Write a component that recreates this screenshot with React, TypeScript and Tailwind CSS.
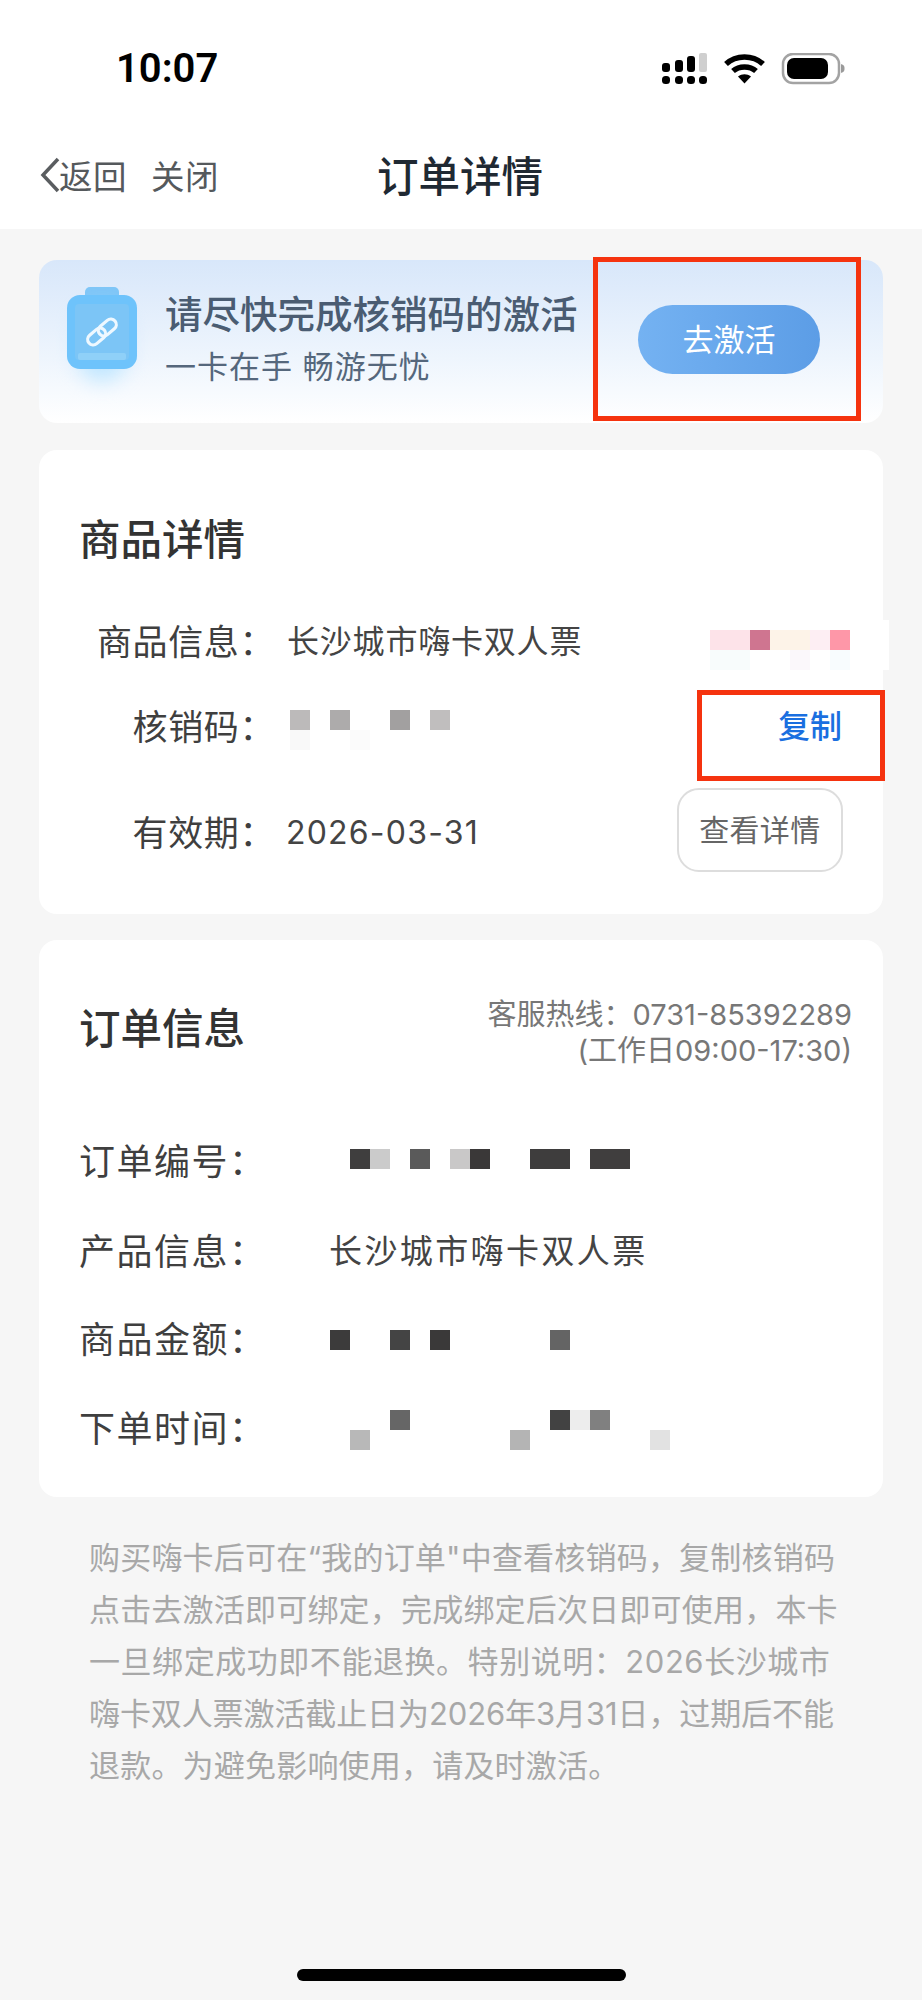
const cjk = "font-['Inter','Noto_Sans_CJK_SC',sans-serif]"

type Cell = [number, number, number, string]

// pixelated censor blocks, drawn on a 20px grid
function Mosaic({ w, h, cells }: { w: number; h: number; cells: Cell[] }) {
  return (
    <svg width={w} height={h} viewBox={`0 0 ${w} ${h}`} className="block shrink-0">
      {cells.map(([x, y, cw, fill], i) => (
        <rect key={i} x={x} y={y} width={cw} height={20} fill={fill} />
      ))}
    </svg>
  )
}

function StatusBar() {
  return (
    <div className="flex h-[100px] items-start justify-between bg-white pl-[116px] pr-[76px] pt-[46px]">
      <span className="font-['Roboto',sans-serif] text-[40px] font-semibold leading-[46px] text-black">10:07</span>
      <svg width={184} height={32} viewBox="0 0 184 32" className="mt-[7px] block">
        <g fill="#000">
          <rect x="0" y="10" width="8" height="9" rx="3" />
          <rect x="13" y="7" width="8" height="12" rx="3" />
          <rect x="25" y="3" width="8" height="16" rx="3" />
          <rect x="37" y="0" width="8" height="19" rx="2" fill="#cfcfcf" />
          <rect x="0" y="23" width="8" height="8" rx="3.5" />
          <rect x="13" y="23" width="8" height="8" rx="3.5" />
          <rect x="25" y="23" width="8" height="8" rx="3.5" />
          <rect x="37" y="23" width="8" height="8" rx="3.5" />
        </g>
        <g fill="none" stroke="#000" strokeWidth="5.5">
          <path d="M64 11 C74 1.5 91 1.5 101 11" />
          <path d="M71 18 C77 12.5 88 12.5 94 18" />
        </g>
        <path d="M76 23.5 C80 20.5 85 20.5 89 23.5 L82.5 30.5 Z" fill="#000" />
        <rect x="121" y="1" width="56" height="29" rx="10" fill="none" stroke="#a3a3a3" strokeWidth="2.5" />
        <rect x="125" y="5" width="41" height="21" rx="7" fill="#000" />
        <path d="M179 11 C182 12 182.5 13 182.5 15.5 C182.5 18 182 19 179 20 Z" fill="#9a9a9a" />
      </svg>
    </div>
  )
}

function NavBar() {
  return (
    <div className="relative flex h-[129px] items-start bg-white pl-[39px] pt-[57px]">
      <svg width={22} height={36} viewBox="0 0 22 36" className="block">
        <path d="M19 2 L4 18 L19 34" fill="none" stroke="#5a5d60" strokeWidth="3.5" />
      </svg>
      <span className="-ml-[2px] text-[33.5px] leading-[40px] tracking-[0.5px] text-[#55595c]">返回</span>
      <span className="ml-[24px] text-[33.5px] leading-[40px] tracking-[0.5px] text-[#55595c]">关闭</span>
      <span className="ml-[158px] -mt-[4px] text-[41.5px] font-medium leading-[48px] text-[#1f2933]">订单详情</span>
    </div>
  )
}

function ActivateBanner() {
  return (
    <div className="relative flex h-[163px] items-start rounded-[18px] bg-gradient-to-b from-[#d8e7fa] via-[#eef5fd] via-60% to-white pl-[28px] pt-[27px]">
      <div className="relative h-[80px] w-[70px] shrink-0">
        <div className="absolute left-[10px] top-[22px] h-[72px] w-[50px] rounded-full bg-[#bfe6ff] blur-[10px]" />
        <div className="mx-auto h-[8px] w-[34px] rounded-t-[5px] bg-[#7fc6f7]" />
        <div className="relative flex h-[74px] w-[70px] flex-col items-center justify-center rounded-[13px] bg-[#6ec3fb]">
          <div className="flex h-[56px] w-[54px] flex-col items-center justify-between rounded-[4px] bg-[#7cc5f6]">
            <svg width={36} height={36} viewBox="0 0 36 36" className="mt-[10px] block">
              <g fill="none" stroke="#eef8ff" strokeWidth="3.2" transform="rotate(-40 18 18)">
                <rect x="1" y="12.5" width="20" height="11" rx="5.5" />
                <rect x="15" y="12.5" width="20" height="11" rx="5.5" />
              </g>
            </svg>
            <div className="h-[7px] w-[48px] rounded-[2px] bg-[#8fd0f8]" />
          </div>
        </div>
      </div>
      <div className="ml-[28px] flex flex-col">
        <span className="mt-[6px] text-[37.5px] font-medium leading-[44px] text-[#4a5c72]">请尽快完成核销码的激活</span>
        <span className="mt-[11px] text-[31px] leading-[38px] tracking-[1px] text-[#55677c]">一卡在手 畅游无忧</span>
      </div>
      <div className="absolute left-[599px] top-[45px] flex h-[69px] w-[182px] items-center justify-center rounded-full bg-gradient-to-r from-[#74b2f2] to-[#5c9de6] text-[31px] leading-none text-white">
        去激活
      </div>
      {/* annotation box */}
      <div className="absolute left-[554px] -top-[3px] h-[164px] w-[268px] border-[5px] border-[#f5330f]" />
    </div>
  )
}

function ProductCard() {
  return (
    <div className="relative mt-[27px] h-[464px] rounded-[18px] bg-white pl-[40px] pt-[66px]">
      <h2 className="text-[41.5px] font-medium leading-[48px] text-[#333]">商品详情</h2>
      <div className="mt-[53px] flex h-[50px] items-center text-[32px] text-[#444]">
        <span className="w-[196px] shrink-0 text-right text-[35px] tracking-[0.6px] text-[#3f3f3f]">商品信息：</span>
        <span className="ml-[12px] w-[310px] shrink-0 tracking-[0.8px]">长沙城市嗨卡双人票</span>
        <div className="ml-[113px] mt-[6px] shrink-0 bg-white pt-[10px] pr-[39px]">
          <Mosaic
            w={140}
            h={40}
            cells={[
              [0, 0, 40, '#fde3e9'],
              [40, 0, 20, '#cf7590'],
              [60, 0, 40, '#fdf3e8'],
              [100, 0, 20, '#fdeef3'],
              [120, 0, 20, '#fe97a8'],
              [0, 20, 40, '#f8fcfc'],
              [80, 20, 20, '#fbf8fb'],
              [120, 20, 20, '#f8fcfe'],
            ]}
          />
        </div>
      </div>
      <div className="mt-[35px] flex h-[50px] items-center text-[32px] text-[#444]">
        <span className="w-[196px] shrink-0 text-right text-[35px] tracking-[0.6px] text-[#3f3f3f]">核销码：</span>
        <div className="ml-[15px] mt-[6px]">
          <Mosaic
            w={160}
            h={40}
            cells={[
              [0, 0, 20, '#bcbaba'],
              [40, 0, 20, '#adabab'],
              [100, 0, 20, '#a2a0a0'],
              [140, 0, 20, '#c0bebe'],
              [0, 20, 20, '#f9f9f9'],
              [60, 20, 20, '#fbfbfb'],
            ]}
          />
        </div>
        <span className="ml-[328px] text-[32px] font-medium text-[#1a6fe0]">复制</span>
      </div>
      {/* annotation box */}
      <div className="absolute left-[658px] top-[240px] h-[91px] w-[188px] border-[5px] border-[#f5330f]" />
      <div className="mt-[39px] flex h-[84px] items-center text-[32px] text-[#444]">
        <span className="w-[196px] shrink-0 text-right text-[35px] tracking-[0.6px] text-[#3f3f3f]">有效期：</span>
        <span className="ml-[11px] tracking-[1.2px]">2026-03-31</span>
        <button className="ml-[198px] -mt-[6px] flex h-[84px] w-[166px] items-center justify-center rounded-[22px] border-2 border-[#dddddd] bg-white text-[30px] tracking-[0.3px] text-[#666]">
          查看详情
        </button>
      </div>
    </div>
  )
}

function InfoRow({ label, children, className }: { label: string; children: React.ReactNode; className: string }) {
  return (
    <div className={`flex h-[50px] items-center text-[33px] text-[#444] ${className}`}>
      <span className="w-[210px] shrink-0 text-[36px] tracking-[1.5px] text-[#3f3f3f]">{label}</span>
      {children}
    </div>
  )
}

function OrderCard() {
  return (
    <div className="mt-[26px] h-[557px] rounded-[18px] bg-white px-[40px] pr-[31px]">
      <div className="flex items-start justify-between pt-[57px]">
        <h2 className="mt-[8px] text-[41.5px] font-medium leading-[48px] text-[#333]">订单信息</h2>
        <div className="text-right text-[29px] leading-[36px] text-[#777]">
          <div>客服热线：0731-85392289</div>
          <div>(工作日09:00-17:30)</div>
        </div>
      </div>
      <InfoRow label="订单编号：" className="mt-[68px]">
        <div className="ml-[61px] -mt-[6px]">
          <Mosaic
            w={280}
            h={20}
            cells={[
              [0, 0, 20, '#3f3e3e'],
              [20, 0, 20, '#cbcbcb'],
              [60, 0, 20, '#5a5a5a'],
              [100, 0, 20, '#c9c8c8'],
              [120, 0, 20, '#3a3838'],
              [180, 0, 40, '#3e3d3d'],
              [240, 0, 40, '#403e3e'],
            ]}
          />
        </div>
      </InfoRow>
      <InfoRow label="产品信息：" className="mt-[40px]">
        <span className="ml-[40px] tracking-[2.4px]">长沙城市嗨卡双人票</span>
      </InfoRow>
      <InfoRow label="商品金额：" className="mt-[38px]">
        <div className="ml-[41px]">
          <Mosaic
            w={240}
            h={20}
            cells={[
              [0, 0, 20, '#3c3b3b'],
              [60, 0, 20, '#444444'],
              [100, 0, 20, '#3a3939'],
              [220, 0, 20, '#646464'],
            ]}
          />
        </div>
      </InfoRow>
      <InfoRow label="下单时间：" className="mt-[39px]">
        <div className="ml-[61px] mt-[2px]">
          <Mosaic
            w={320}
            h={40}
            cells={[
              [40, 0, 20, '#666666'],
              [200, 0, 20, '#424242'],
              [220, 0, 20, '#ededed'],
              [240, 0, 20, '#808080'],
              [0, 20, 20, '#b8b8b8'],
              [160, 20, 20, '#b4b4b4'],
              [300, 20, 20, '#e2e2e2'],
            ]}
          />
        </div>
      </InfoRow>
    </div>
  )
}

export default function App() {
  return (
    <div className={`flex h-[2000px] w-[922px] flex-col bg-[#f6f6f6] ${cjk}`}>
      <StatusBar />
      <NavBar />
      <div className="flex flex-1 flex-col px-[39px] pt-[31px]">
        <ActivateBanner />
        <ProductCard />
        <OrderCard />
        <div className="mt-[35px] pl-[50px] text-[31px] leading-[52px] whitespace-nowrap text-[#a8a8a8]">
          <div className="tracking-[0.2px]">购买嗨卡后可在“我的订单"中查看核销码，复制核销码</div>
          <div className="tracking-[0.2px]">点击去激活即可绑定，完成绑定后次日即可使用，本卡</div>
          <div className="tracking-[0.55px]">一旦绑定成功即不能退换。特别说明：2026长沙城市</div>
          <div className="tracking-[-0.1px]">嗨卡双人票激活截止日为2026年3月31日，过期后不能</div>
          <div className="tracking-[0.2px]">退款。为避免影响使用，请及时激活。</div>
        </div>
        <div className="mt-auto mb-[19px] h-[12px] w-[329px] self-center rounded-full bg-black" />
      </div>
    </div>
  )
}
